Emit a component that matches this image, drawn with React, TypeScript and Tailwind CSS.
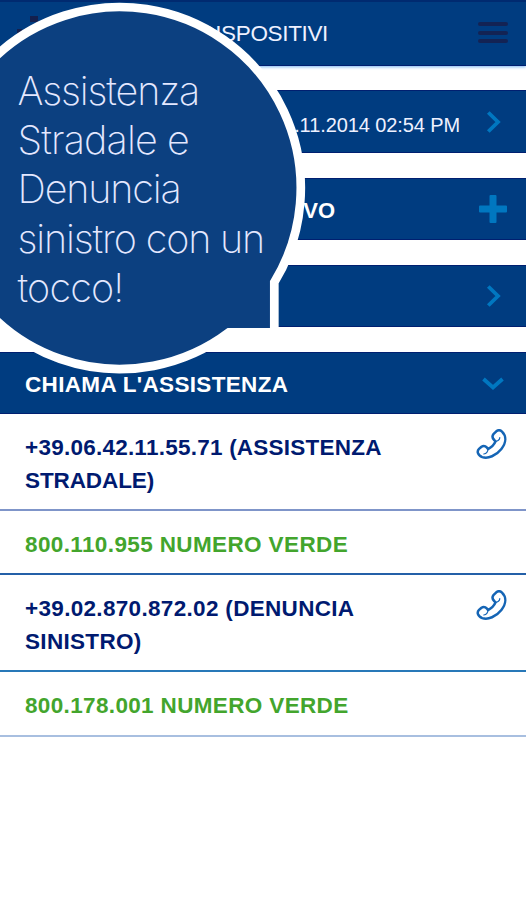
import React from "react";

function Chevron({ down = false }: { down?: boolean }) {
  return (
    <svg viewBox="0 0 32 32" className="block h-8 w-8" fill="none" stroke="#0077c0" strokeWidth="3.8">
      {down ? <path d="M6.500 12 16 20.500 25.500 12" /> : <path d="M11.300 6.500 21 16 11.300 25.500" />}
    </svg>
  );
}

function Plus() {
  return (
    <svg viewBox="0 0 32 32" className="block h-8 w-8" fill="#0077c0">
      <path d="M13.500 2h5a1 1 0 0 1 1 1v9.500h9.500a1 1 0 0 1 1 1v5a1 1 0 0 1-1 1h-9.500v9.500a1 1 0 0 1-1 1h-5a1 1 0 0 1-1-1v-9.500H3a1 1 0 0 1-1-1v-5a1 1 0 0 1 1-1h9.500V3a1 1 0 0 1 1-1z" />
    </svg>
  );
}

function Handset() {
  return (
    <svg
      viewBox="0 0 32 32"
      className="-mt-[2px] block h-8 w-8 shrink-0"
      fill="none"
      stroke="#1565b5"
      strokeWidth="2.500"
      strokeLinejoin="round"
      strokeLinecap="round"
    >
      <path d="M17.400 5.200 20.300 2.300C22 .9 24.300 1 26 2.600c4.500 4.400 4.300 11-.6 17.300-5.400 6.800-13.300 10.100-19.100 8.200-4.800-1.700-5.600-6-3.300-8.200l2.500-2.200c1.800-1.200 3.900-.8 5.500 1l1 1.300c3.600-1.700 6.100-4.200 7.600-7.700l-1.400-1.300c-1.800-1.800-2.100-4-.8-5.800z" />
      <path d="M19.600 12.300c2 .1 4.100-1.500 4.200-3.700M7.800 25c2.200-.4 4.100-2.400 4.200-5" strokeWidth="1.200" />
    </svg>
  );
}

const barBase = "flex shrink-0 items-center bg-[#003c80] border-y border-[#001f70] text-white";

export default function App() {
  return (
    <main className="relative h-[900px] w-[526px] overflow-hidden bg-white font-['Liberation_Sans',Arial,sans-serif]">
      <header className="flex h-[66px] items-center justify-end border-t-2 border-b border-t-[#002a70] border-b-[#001f70] bg-[#003c80] pr-[18px] shadow-[0_1px_3px_#79b5f2]">
        <h1 className="mr-[150px] whitespace-nowrap text-[22.5px] tracking-[-0.35px] text-[#eef1ff]">DISPOSITIVI</h1>
        <div className="mb-[2px] flex w-[30px] flex-col gap-[4.5px]">
          <span className="h-[4px] rounded-full bg-[#132354]" />
          <span className="h-[4px] rounded-full bg-[#132354]" />
          <span className="h-[4px] rounded-full bg-[#132354]" />
        </div>
      </header>
      <div className="mt-6 flex flex-col gap-[25px]">
        <section className={`${barBase} h-[63px] justify-end pr-[17px]`}>
          <span className="mr-[17px] pt-[6px] text-[20px] tracking-[-0.1px] text-[#eef1ff]">.11.2014 02:54 PM</span>
          <Chevron />
        </section>
        <section className={`${barBase} h-[62px] justify-end pr-[17px]`}>
          <span className="mr-[142px] pt-[3px] text-[22px] font-bold">VO</span>
          <Plus />
        </section>
        <section className={`${barBase} h-[62px] justify-end pr-[17px]`}>
          <Chevron />
        </section>
        <section className={`${barBase} h-[62px] justify-between pl-[25px] pr-[17px]`}>
          <h2 className="pt-[3px] text-[22.500px] font-bold tracking-[0.33px]">CHIAMA L'ASSISTENZA</h2>
          <Chevron down />
        </section>
      </div>
      <ul className="text-[22.500px] font-bold leading-[33px] text-[#001a70]">
        <li className="flex h-[97px] items-start justify-between border-b-2 border-[#7f95c9] pl-[25px] pr-[18px] pt-[17px]">
          <span className="w-[380px] tracking-[0.240px]">+39.06.42.11.55.71 (ASSISTENZA<br /><span className="tracking-[-0.1px]">STRADALE)</span></span>
          <Handset />
        </li>
        <li className="h-[64px] border-b-2 border-[#2460a8] pl-[25px] pt-[17px] tracking-[0.380px] text-[#43a52d]">800.110.955 NUMERO VERDE</li>
        <li className="flex h-[97px] items-start justify-between border-b-2 border-[#2878b8] pl-[25px] pr-[18px] pt-[17px]">
          <span className="w-[380px] tracking-[0.320px]">+39.02.870.872.02 (DENUNCIA<br />SINISTRO)</span>
          <Handset />
        </li>
        <li className="h-[65px] border-b-2 border-[#a8bfe0] pl-[25px] pt-[17px] tracking-[0.350px] text-[#43a52d]">800.178.001 NUMERO VERDE</li>
      </ul>
      <aside className="absolute left-0 top-0 h-[380px] w-[310px]">
        <svg viewBox="0 0 310 380" className="absolute inset-0 h-full w-full">
          <path d="M30 22V16h8v6zM17 33v-4h5v4z" fill="#14204e" />
          <path
            d="M274.300 282.300A181 181 0 1 0 229.100 332.300H274.300Z"
            fill="#0c4080"
            stroke="#fff"
            strokeWidth="8.700"
          />
        </svg>
        <p className="relative pl-[17.5px] pt-[67px] font-[Inter] text-[39.500px] font-[250] leading-[49.200px] tracking-[-1.150px] text-[#e4e8ff]">
          Assistenza<br />
          <span className="tracking-[-0.850px]">Stradale e</span><br />
          Denuncia<br />sinistro con un<br />
          <span className="tracking-[-0.800px]">tocco!</span>
        </p>
      </aside>
    </main>
  );
}
